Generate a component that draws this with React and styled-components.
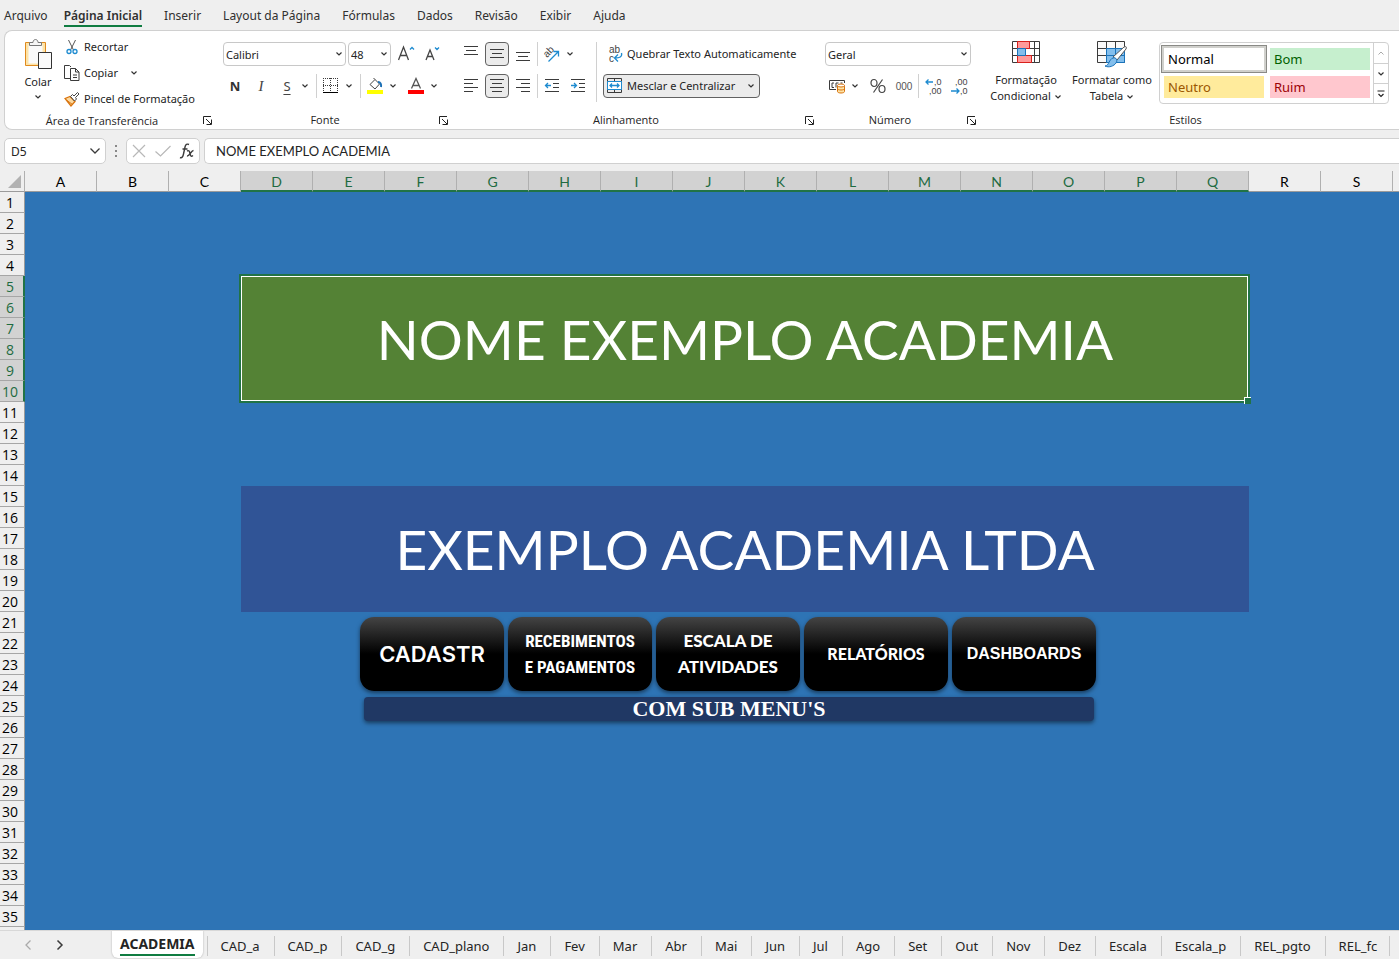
import React from "react";
import styled, { createGlobalStyle } from "styled-components";

const GlobalStyle = createGlobalStyle`
  * {
    box-sizing: border-box;
  }
  body {
    margin: 0;
    background: #efefef;
    color: #242424;
    font-family: "Noto Sans", "Open Sans", sans-serif;
    font-size: 12px;
  }
  button, input, select {
    font: inherit;
    color: inherit;
  }
  button {
    padding: 0;
    border: 0;
    background: none;
    cursor: pointer;
  }
`;

const Page = styled.div`
  height: 100vh;
  display: flex;
  flex-direction: column;
  overflow: hidden;
`;

/* ---------- menu ---------- */

const Menu = styled.nav`
  display: flex;
  flex: none;
  gap: 22px;
  height: 30px;
  padding: 4px 4px 0;
`;

const MenuItem = styled.a`
  height: 23px;
  line-height: 23px;
  color: #303030;
  font-size: 12px;
  font-weight: ${(p) => (p.$active ? 600 : 400)};
  text-decoration: none;
  white-space: nowrap;
  border-bottom: 2px solid ${(p) => (p.$active ? "#107c41" : "transparent")};

  &:first-child {
    margin-right: -6px;
  }
`;

/* ---------- ribbon ---------- */

const Ribbon = styled.div`
  display: flex;
  flex: none;
  height: 100px;
  margin-left: 4px;
  background: #fff;
  border: 1px solid #d0d0d0;
  border-right: 0;
  border-radius: 8px 0 0 8px;
`;

const Group = styled.section`
  position: relative;
  display: flex;
  flex-direction: column;
  justify-content: space-between;
  flex: ${(p) => (p.$width ? `0 0 ${p.$width}px` : "1 0 0")};

  & + &::before {
    content: "";
    position: absolute;
    left: -1px;
    top: 4px;
    bottom: 4px;
    width: 1px;
    background: #d0d0d0;
  }
`;

const GroupBody = styled.div`
  display: flex;
  padding: ${(p) => p.$pad || "11px 0 0 8px"};
`;

const GroupFooter = styled.div`
  display: flex;
  align-items: center;
  height: 18px;
  padding: 0 3px 0 0;
`;

const GroupName = styled.div`
  flex: 1;
  padding-right: 4px;
  text-align: center;
  font-family: "Open Sans", sans-serif;
  font-size: 11px;
  line-height: 16px;
`;

const Stack = styled.div`
  display: flex;
  flex-direction: column;
  align-items: flex-start;
  gap: ${(p) => p.$gap ?? 8}px;
  margin-left: ${(p) => p.$space || 0}px;
`;

const Row = styled.div`
  display: flex;
  align-items: center;
  gap: 2px;
  height: 24px;
`;

const Divider = styled.span`
  flex: none;
  width: 1px;
  height: ${(p) => p.$height || 24}px;
  margin-left: ${(p) => p.$space || 0}px;
  background: #d0d0d0;
`;

const IconButton = styled.button`
  display: flex;
  align-items: center;
  justify-content: center;
  flex: none;
  width: 24px;
  height: 24px;
  border-radius: 4px;
  border: 1px solid ${(p) => (p.$on ? "#616161" : "transparent")};
  background: ${(p) => (p.$on ? "#ebebeb" : "transparent")};
  margin-left: ${(p) => p.$space || 0}px;

  svg {
    flex: none;
  }
`;

const Split = styled.div`
  display: flex;
  align-items: center;
  margin-left: ${(p) => p.$space || 0}px;
`;

const Arrow = styled.button`
  display: flex;
  align-items: center;
  justify-content: center;
  width: 12px;
  height: 24px;
`;

const TextButton = styled.button`
  display: flex;
  align-items: center;
  gap: 4px;
  height: ${(p) => p.$height || 24}px;
  padding: ${(p) => p.$pad || "0"};
  border: 1px solid ${(p) => (p.$on ? "#616161" : "transparent")};
  border-radius: 4px;
  background: ${(p) => (p.$on ? "#ebebeb" : "transparent")};
  font-size: 11px;
  line-height: 16px;
  white-space: nowrap;
`;

const BigButton = styled.button`
  display: flex;
  flex-direction: column;
  align-items: center;
  width: ${(p) => p.$width}px;
  padding-top: ${(p) => p.$top || 0}px;
  font-size: 11px;
  line-height: 16px;
  gap: ${(p) => p.$gap || 0}px;

  span svg {
    vertical-align: middle;
  }
`;

const Combo = styled.label`
  display: flex;
  align-items: center;
  width: ${(p) => p.$width}px;
  height: 24px;
  padding: 0 2px;
  border: 1px solid #c8c8c8;
  border-radius: 4px;
  background: #fff;

  select {
    flex: 1;
    min-width: 0;
    padding: 0;
    border: 0;
    outline: 0;
    background: none;
    appearance: none;
    font-size: 11px;
  }
`;

const Gallery = styled.div`
  display: flex;
  height: 62px;
  margin: 2px 0 0 3px;
  border: 1px solid #d0d0d0;
  border-radius: 4px;
`;

const StyleGrid = styled.div`
  display: grid;
  grid-template-columns: 100px 100px;
  grid-auto-rows: 22px;
  gap: 6px;
  padding: 5px 3px 5px 4px;
`;

const StyleCell = styled.button`
  padding: 0 0 1px 4px;
  text-align: left;
  font-size: 13px;
  line-height: 20px;
  color: ${(p) => p.$color};
  background: ${(p) => p.$bg};
  box-shadow: ${(p) => (p.$on ? "0 0 0 2px #d0d0cc, 0 0 0 3px #8a8a86" : "none")};
`;

const GalleryNav = styled.div`
  display: grid;
  grid-template-rows: 1fr 1fr 1fr;
  width: 15px;
  border-left: 1px solid #d0d0d0;

  button {
    display: flex;
    align-items: center;
    justify-content: center;
  }
  button + button {
    border-top: 1px solid #d0d0d0;
  }
`;

/* ---------- formula bar ---------- */

const FormulaBar = styled.div`
  display: flex;
  flex: none;
  align-items: flex-start;
  height: 41px;
  padding: 8px 0 0 4px;
`;

const Field = styled.div`
  display: flex;
  align-items: center;
  height: 26px;
  border: 1px solid #d0d0d0;
  border-radius: 5px;
  background: #fff;
`;

const NameBox = styled(Field)`
  width: 102px;
  padding: 0 4px 0 6px;

  input {
    flex: 1;
    min-width: 0;
    padding: 0;
    border: 0;
    background: none;
    outline: 0;
    font-size: 12px;
  }
`;

const Dots = styled.div`
  display: flex;
  align-items: center;
  justify-content: center;
  width: 20px;
  height: 26px;
`;

const FormulaTools = styled(Field)`
  width: 74px;
  margin-right: 4px;
`;

const FormulaInput = styled.input`
  flex: 1;
  height: 26px;
  min-width: 0;
  padding: 0 11px;
  border: 1px solid #d0d0d0;
  border-right: 0;
  border-radius: 5px 0 0 5px;
  outline: 0;
  background: #fff;
  font-family: Lato, sans-serif;
  font-size: 13px;
`;

/* ---------- sheet ---------- */

const Sheet = styled.main`
  position: relative;
  flex: 1;
  min-height: 0;
  overflow: hidden;
  background: #2e74b5;
`;

const Table = styled.table`
  width: 1465px;
  table-layout: fixed;
  border-spacing: 0;
  font-family: Lato, "Open Sans", sans-serif;

  th, td {
    padding: 0;
  }
`;

const Corner = styled.th`
  width: 25px;
  height: 21px;
  background: #efefef;
  border-right: 1px solid #b0b0b0;
  border-bottom: 1px solid #9b9b9b;

  svg {
    display: block;
    margin-left: 8px;
  }
`;

const ColHead = styled.th`
  width: 72px;
  height: 21px;
  font-size: 14px;
  font-weight: 400;
  vertical-align: top;
  color: ${(p) => (p.$on ? "#1e6b41" : "#000")};
  background: ${(p) => (p.$on ? "#d2d2d2" : "#efefef")};
  border-right: 1px solid #b0b0b0;
  border-bottom: ${(p) => (p.$on ? "2px solid #217346" : "1px solid #9b9b9b")};

  span {
    display: block;
    height: 19px;
    line-height: 21px;
  }
`;

const RowHead = styled.th`
  height: 21px;
  font-family: "Open Sans", sans-serif;
  font-size: 14px;
  font-weight: 400;
  color: ${(p) => (p.$on ? "#1e6b41" : "#000")};
  background: ${(p) => (p.$on ? "#d2d2d2" : "#efefef")};
  border-right: ${(p) => (p.$on ? "2px solid #217346" : "1px solid #9b9b9b")};
  border-bottom: 1px solid #a6a6a6;

  span {
    display: block;
    width: 20px;
    height: 20px;
    line-height: 22px;
  }
`;

const Banner = styled.td`
  position: relative;
  color: #fff;
  background: ${(p) => p.$bg};
  font-size: 55px;
  text-align: center;
  vertical-align: middle;
`;

const Selection = styled.span`
  position: absolute;
  inset: -2px -1px -1px -2px;
  border: 2px solid #217346;
  box-shadow: inset 0 0 0 1px #fff;

  &::after {
    content: "";
    position: absolute;
    right: -3px;
    bottom: -3px;
    width: 6px;
    height: 6px;
    background: #217346;
    border-top: 1px solid #fff;
    border-left: 1px solid #fff;
  }
`;

/* shapes float over the cells */
const Shapes = styled.div`
  position: absolute;
  left: 360px;
  top: 446px;
  width: 736px;
`;

const ShapeRow = styled.div`
  display: flex;
  gap: 4px;
`;

const Shape = styled.button`
  width: 144px;
  height: 74px;
  border-radius: 14px;
  color: #fff;
  background: linear-gradient(#444 0%, #000 50%);
  box-shadow: 0 2px 4px rgba(0, 0, 0, 0.5);
  font-family: ${(p) => p.$font};
  font-size: ${(p) => p.$size}px;
  font-weight: ${(p) => p.$weight || 700};
  line-height: 26px;
`;

const SubMenu = styled.button`
  display: block;
  width: 730px;
  height: 24px;
  margin: 6px 0 0 4px;
  border-radius: 4px;
  color: #fff;
  background: #203864;
  box-shadow: 0 2px 4px rgba(0, 0, 0, 0.5);
  font-family: "Liberation Serif", serif;
  font-size: 22px;
  font-weight: 700;
  line-height: 24px;
`;

/* ---------- sheet tabs ---------- */

const TabBar = styled.div`
  display: flex;
  flex: none;
  height: 29px;
  overflow: hidden;
  border-top: 1px solid #d8d8d8;
`;

const TabNav = styled.div`
  display: flex;
  align-items: center;
  flex: none;
  width: 112px;
  padding-left: 20px;
  gap: 16px;

  button {
    display: flex;
    justify-content: center;
    width: 16px;
  }
`;

const ActiveTab = styled.button`
  flex: none;
  height: 27px;
  margin-right: 4px;
  padding: 0 8px 2px;
  background: #fff;
  border-radius: 0 0 6px 6px;
  box-shadow: 0 0 2px rgba(0, 0, 0, 0.3);
  font-size: 14px;
  font-weight: 700;

  span {
    display: block;
    height: 24px;
    line-height: 23px;
    border-bottom: 2px solid #107c41;
  }
`;

const Tab = styled.button`
  flex: none;
  height: 20px;
  margin-top: 5px;
  padding: 0 14px 0 13px;
  border-left: 1px solid #c8c8c8;
  font-size: 13px;
  line-height: 20px;

  &:last-child {
    padding-right: 12px;
    border-right: 1px solid #c8c8c8;
  }
`;

/* ---------- icons ---------- */

const Svg = ({ w = 16, h = 16, children }) => (
  <svg width={w} height={h} viewBox={`0 0 ${w} ${h}`} fill="none" stroke="#3b3b3b" aria-hidden="true">
    {children}
  </svg>
);

const Glyphs = ({ x, y, size = 9, ...rest }) => (
  <text x={x} y={y} fontFamily="Liberation Sans" fontSize={size} fill="#444" stroke="none" {...rest} />
);

const Chevron = ({ color = "#333" }) => (
  <Svg w={8} h={6}>
    <path d="M1.5 1.5 4 4l2.5-2.5" stroke={color} strokeWidth="1.2" />
  </Svg>
);

const Launcher = () => (
  <button aria-label="Mais opções">
    <Svg w={9} h={9}>
      <path d="M.5 8V.5H8M3 3l5 5M8.5 3.5v5h-5" stroke="#222" />
    </Svg>
  </button>
);

const PasteIcon = () => (
  <Svg w={28} h={32}>
    <path d="M1.5 4.500h20v23h-20z" fill="#fde3a7" stroke="#e08a1e" />
    <path d="M4.5 6.500h14v19h-14z" fill="#fafafa" stroke="none" />
    <path d="M5.5 7.500v-3h3.500c0-4 5-4 5 0h3.500v3z" fill="#f6f6f6" stroke="#777" />
    <path d="M14.5 14.500h13v16h-13z" fill="#fafafa" stroke="#333" />
  </Svg>
);

const CutIcon = () => (
  <Svg>
    <path d="M4.500 1 9.500 11M11.500 1 6.500 11" stroke="#555" />
    <circle cx="5" cy="12.5" r="2" stroke="#1e8bd0" strokeWidth="1.3" />
    <circle cx="11" cy="12.5" r="2" stroke="#1e8bd0" strokeWidth="1.3" />
  </Svg>
);

const CopyIcon = () => (
  <Svg>
    <path d="M6 13.500H.5V.5h5l1.500 1.500" />
    <path d="M6.500 3.500h5l3.500 3.500v8.500H6.500zM11.500 3.500V7H15M9 10h4M9 12.500h4" />
  </Svg>
);

const BrushIcon = () => (
  <Svg>
    <path d="M1 7.500 6 5.500l5 5-4 4.500z" fill="#fbd9a0" stroke="#d9730d" strokeWidth="1.3" />
    <path d="M3 9.500l5.500 4" stroke="#d9730d" />
    <path d="M6.500 5.500 8.500 3.500l1.500 1.500L13.500 1.500l1.500 1.500-3.500 3.500 1 1.500-2 2z" fill="#fff" stroke="#444" />
  </Svg>
);

const GrowFont = ({ size, up }) => (
  <Svg w={18} h={20}>
    <path
      d={size > 14 ? "M.5 16 5.500 3l5 13M2.500 11.500h6" : "M2 16 6 6l4 10M3.500 12.500h5"}
      stroke="#444"
      strokeWidth="1.3"
    />
    <path d={up ? "M12 5.500l2-2 2 2" : "M11 3.500l2 2 2-2"} stroke="#1e8bd0" strokeWidth="1.3" />
  </Svg>
);

const BoldMark = styled.b`
  font-size: 13px;
  color: #333;
`;

const ItalicMark = styled.i`
  font-family: "Liberation Serif", serif;
  font-size: 15px;
  color: #444;
`;

const UnderMark = styled.u`
  font-size: 13px;
  line-height: 20px;
  color: #444;
  text-underline-offset: 3px;
`;

const BordersIcon = () => (
  <Svg>
    <path d="M0 .5h15M0 7.500h15M.5 0v14M7.500 0v14M14.500 0v14" strokeDasharray="1 1" />
    <path d="M0 14.500h15" stroke="#000" />
  </Svg>
);

const FillIcon = () => (
  <Svg w={16} h={18}>
    <path d="M3 7.500 8 2.500l4.500 4.500-4.500 5zM8 2.500 6.500 1" stroke="#444" />
    <path d="M11 5c2.500 0 3.500 2 3 5" stroke="#1a6fb5" strokeWidth="2" />
    <path d="M0 15h16" stroke="#ff0" strokeWidth="4" />
  </Svg>
);

const FontColorIcon = () => (
  <Svg w={16} h={18}>
    <path d="M3.500 11.500 8 1.500l4.500 10M5 8.500h6" stroke="#555" strokeWidth="1.3" />
    <path d="M0 15h16" stroke="#f00" strokeWidth="4" />
  </Svg>
);

/* each entry is [x1, x2] of a text line */
const LINES = {
  left: [[1, 15], [1, 10], [1, 15], [1, 10]],
  center: [[1, 15], [3, 13], [1, 15], [3, 13]],
  right: [[1, 15], [6, 15], [1, 15], [6, 15]],
  vertical: [[1, 15], [3, 13], [1, 15]],
};

const AlignIcon = ({ kind, top = 1.5 }) => (
  <Svg>
    {LINES[kind].map(([a, b], i) => (
      <path key={i} d={`M${a} ${top + i * 4}H${b}`} />
    ))}
  </Svg>
);

const AngleIcon = () => (
  <Svg w={20} h={20}>
    <Glyphs x={2} y={11} size={10} transform="rotate(-45 7 9)">ab</Glyphs>
    <path d="M6.500 17.500 16 8M11.500 7.500h5v5" stroke="#1e8bd0" strokeWidth="1.3" />
  </Svg>
);

const IndentIcon = ({ out }) => (
  <Svg>
    <path d="M1 1.500h14M9 5.500h6M9 9.500h6M1 13.500h14" />
    <path
      d={out ? "M7 7.500H1.500M4 5 1.500 7.500 4 10" : "M1 7.500h5.500M4 5 6.500 7.500 4 10"}
      stroke="#1e8bd0"
      strokeWidth="1.3"
    />
  </Svg>
);

const WrapIcon = () => (
  <Svg w={15} h={20}>
    <Glyphs x={1} y={9} size={10}>ab</Glyphs>
    <Glyphs x={1} y={18} size={10}>c</Glyphs>
    <path d="M13.500 9c1 4-2 5-6.500 5M10 10.500 6.500 14l3.500 3.500" stroke="#1e8bd0" strokeWidth="1.3" />
  </Svg>
);

const MergeIcon = () => (
  <Svg>
    <path d="M.5.5h14v14H.5zM7.500.5v3M7.500 11.500v3" />
    <path d="M.5 3.500h14v8H.5z" fill="#fff" stroke="#1e8bd0" />
    <path d="M3 7.500h9M5 5.500 3 7.500l2 2M10 5.500l2 2-2 2" stroke="#1e8bd0" strokeWidth="1.3" />
  </Svg>
);

const MoneyIcon = () => (
  <Svg w={18} h={16}>
    <path d="M8 11.500H1.500v-9h15V5" />
    <path d="M6 5H4v4.500h2M8 9.500V5h2.500M12.500 5h2" />
    <path d="M9.500 7.500v6c0 2 7 2 7 0v-6" fill="#fde3a7" stroke="#d9730d" />
    <ellipse cx="13" cy="7.500" rx="3.5" ry="1.5" fill="#fff" stroke="#d9730d" />
    <path d="M9.500 10.500c0 2 7 2 7 0" stroke="#d9730d" />
  </Svg>
);

const PercentIcon = () => (
  <Svg>
    <path d="M12.500 1.500 3.500 14.500" stroke="#444" strokeWidth="1.2" />
    <ellipse cx="4" cy="5" rx="3" ry="3.500" stroke="#444" strokeWidth="1.2" />
    <ellipse cx="12" cy="11" rx="3" ry="3.500" stroke="#444" strokeWidth="1.2" />
  </Svg>
);

const Thousands = styled.span`
  font-family: "Liberation Sans", sans-serif;
  font-size: 10px;
  color: #555;
`;

const DecimalIcon = ({ more }) => (
  <Svg w={18} h={22}>
    <Glyphs x={more ? 10 : 5} y={10}>{more ? ",0" : ",00"}</Glyphs>
    <Glyphs x={more ? 5 : 10} y={19}>{more ? ",00" : ",0"}</Glyphs>
    <path
      d={more ? "M9 7H2M4.500 4.500 2 7l2.500 2.500" : "M1 16h8M6.500 13.500 9 16l-2.500 2.500"}
      stroke="#1e8bd0"
      strokeWidth="1.3"
    />
  </Svg>
);

const CondIcon = () => (
  <Svg w={28} h={24}>
    <path d="M.5 1.500h27v21H.5zM.5 8.500h27M.5 15.500h27M5.500 1.500v21M22.500 1.500v21" />
    <path d="M5.500 1.500h12v7h-12zM5.500 15.500h14v7h-14z" fill="#ff9a9a" stroke="#d8201c" />
    <path d="M5.500 8.500h8v7h-8z" fill="#83beec" stroke="#1a73ba" />
    <path d="M14 9h8v6h-8z" fill="#fff" stroke="none" />
  </Svg>
);

const TableIcon = () => (
  <Svg w={30} h={28}>
    <path d="M.5 1.500h27v21H.5zM9.500 1.500v21M18.500 1.500v7M.5 8.500h27M.5 15.500h9" fill="#fafafa" />
    <path d="M9.500 8.500h18v14h-18z" fill="#83beec" stroke="#1a73ba" />
    <path d="M18.500 8.500v14M9.500 15.500h18" stroke="#1a73ba" />
    <path d="M16 17 27 7c2-1 3 0 2 2l-9 11z" fill="#fff" stroke="#555" />
    <path d="M8 26c4 0 4-7 8-8 3-1 5 2 3 5s-7 5-11 3z" fill="#83beec" stroke="#1a73ba" />
  </Svg>
);

/* ---------- data ---------- */

const MENU = ["Arquivo", "Página Inicial", "Inserir", "Layout da Página", "Fórmulas", "Dados", "Revisão", "Exibir", "Ajuda"];

const COLUMNS = "ABCDEFGHIJKLMNOPQRST".split("");
const ROWS = Array.from({ length: 36 }, (_, i) => i + 1);

const BANNERS = {
  5: { text: "NOME EXEMPLO ACADEMIA", bg: "#548235", selected: true },
  15: { text: "EXEMPLO ACADEMIA LTDA", bg: "#305496" },
};

const SHAPES = [
  { text: ["CADASTR"], font: "Inter, sans-serif", size: 22, weight: 600 },
  { text: ["RECEBIMENTOS", "E PAGAMENTOS"], font: '"Liberation Sans Narrow", "Roboto Condensed", Roboto, sans-serif', size: 17 },
  { text: ["ESCALA DE", "ATIVIDADES"], font: "Lato, sans-serif", size: 17, weight: 900 },
  { text: ["RELATÓRIOS"], font: "Lato, sans-serif", size: 16, weight: 900 },
  { text: ["DASHBOARDS"], font: '"Liberation Sans", sans-serif', size: 16 },
];

const TABS = [
  "CAD_a", "CAD_p", "CAD_g", "CAD_plano", "Jan", "Fev", "Mar", "Abr", "Mai", "Jun", "Jul",
  "Ago", "Set", "Out", "Nov", "Dez", "Escala", "Escala_p", "REL_pgto", "REL_fc",
];

/* ---------- parts ---------- */

function Dropdown({ label, value, width }) {
  return (
    <Combo $width={width}>
      <select aria-label={label} defaultValue={value}>
        <option>{value}</option>
      </select>
      <Chevron />
    </Combo>
  );
}

function SplitButton({ label, space, children }) {
  return (
    <Split $space={space}>
      <IconButton aria-label={label}>{children}</IconButton>
      <Arrow aria-label={`${label}: opções`}>
        <Chevron />
      </Arrow>
    </Split>
  );
}

function RibbonGroup({ name, width, pad, launcher = true, children }) {
  return (
    <Group $width={width} aria-label={name}>
      <GroupBody $pad={pad}>{children}</GroupBody>
      <GroupFooter>
        <GroupName>{name}</GroupName>
        {launcher && <Launcher />}
      </GroupFooter>
    </Group>
  );
}

function RibbonBar() {
  return (
    <Ribbon>
      <RibbonGroup name="Área de Transferência" width={210} pad="3px 0 0 10px">
        <BigButton $width={46} $gap={4} $top={4}>
          <PasteIcon />
          <span>Colar</span>
          <Chevron />
        </BigButton>
        <Stack $gap={0}>
          <TextButton $height={26} $pad="0 2px">
            <CutIcon />
            Recortar
          </TextButton>
          <TextButton $height={26} $pad="0 2px">
            <CopyIcon />
            Copiar
            <Split $space={8}>
              <Chevron />
            </Split>
          </TextButton>
          <TextButton $height={26} $pad="0 2px">
            <BrushIcon />
            Pincel de Formatação
          </TextButton>
        </Stack>
      </RibbonGroup>

      <RibbonGroup name="Fonte" width={236}>
        <Stack>
          <Row>
            <Dropdown label="Fonte" value="Calibri" width={123} />
            <Dropdown label="Tamanho" value="48" width={43} />
            <IconButton aria-label="Aumentar fonte" $space={2}>
              <GrowFont size={18} up />
            </IconButton>
            <IconButton aria-label="Diminuir fonte">
              <GrowFont size={14} />
            </IconButton>
          </Row>
          <Row>
            <IconButton><BoldMark>N</BoldMark></IconButton>
            <IconButton><ItalicMark>I</ItalicMark></IconButton>
            <SplitButton label="Sublinhado"><UnderMark>S</UnderMark></SplitButton>
            <Divider $space={3} />
            <SplitButton label="Bordas"><BordersIcon /></SplitButton>
            <Divider $space={3} />
            <SplitButton label="Cor de preenchimento"><FillIcon /></SplitButton>
            <SplitButton label="Cor da fonte" space={3}><FontColorIcon /></SplitButton>
          </Row>
        </Stack>
      </RibbonGroup>

      <RibbonGroup name="Alinhamento" width={366}>
        <Stack>
          <Row>
            <IconButton aria-label="Em cima"><AlignIcon kind="vertical" top={0.5} /></IconButton>
            <IconButton aria-label="No meio" $on><AlignIcon kind="vertical" top={3.5} /></IconButton>
            <IconButton aria-label="Embaixo"><AlignIcon kind="vertical" top={6.5} /></IconButton>
            <Divider />
            <SplitButton label="Orientação"><AngleIcon /></SplitButton>
          </Row>
          <Row>
            <IconButton aria-label="Esquerda"><AlignIcon kind="left" /></IconButton>
            <IconButton aria-label="Centro" $on><AlignIcon kind="center" /></IconButton>
            <IconButton aria-label="Direita"><AlignIcon kind="right" /></IconButton>
            <Divider />
            <IconButton aria-label="Diminuir recuo"><IndentIcon out /></IconButton>
            <IconButton aria-label="Aumentar recuo"><IndentIcon /></IconButton>
          </Row>
        </Stack>
        <Divider $space={6} $height={60} />
        <Stack $space={6}>
          <TextButton $pad="0 4px"><WrapIcon />Quebrar Texto Automaticamente</TextButton>
          <TextButton $on $pad="0 4px 0 3px">
            <MergeIcon />
            Mesclar e Centralizar
            <Split $space={8}><Chevron /></Split>
          </TextButton>
        </Stack>
      </RibbonGroup>

      <RibbonGroup name="Número" width={162}>
        <Stack>
          <Row>
            <Dropdown label="Formato de número" value="Geral" width={146} />
          </Row>
          <Row>
            <SplitButton label="Contabilização"><MoneyIcon /></SplitButton>
            <IconButton aria-label="Porcentagem" $space={3}><PercentIcon /></IconButton>
            <IconButton><Thousands>000</Thousands></IconButton>
            <Divider />
            <IconButton aria-label="Aumentar casas"><DecimalIcon more /></IconButton>
            <IconButton aria-label="Diminuir casas"><DecimalIcon /></IconButton>
          </Row>
        </Stack>
      </RibbonGroup>

      <RibbonGroup name="Estilos" launcher={false} pad="9px 0 0 5px">
        <BigButton $width={84} $gap={8}>
          <CondIcon />
          <span>Formatação<br />Condicional <Chevron /></span>
        </BigButton>
        <BigButton $width={88} $gap={4}>
          <TableIcon />
          <span>Formatar como<br />Tabela <Chevron /></span>
        </BigButton>
        <Gallery>
          <StyleGrid>
            <StyleCell $on $color="#000" $bg="#fff">Normal</StyleCell>
            <StyleCell $color="#006100" $bg="#c6efce">Bom</StyleCell>
            <StyleCell $color="#9c5700" $bg="#ffeb9c">Neutro</StyleCell>
            <StyleCell $color="#9c0006" $bg="#ffc7ce">Ruim</StyleCell>
          </StyleGrid>
          <GalleryNav>
            <button aria-label="Anterior">
              <Svg w={8} h={6}><path d="M1.500 4.500 4 2l2.500 2.500" stroke="#aaa" /></Svg>
            </button>
            <button aria-label="Próximo"><Chevron /></button>
            <button aria-label="Mais estilos">
              <Svg w={8} h={8}><path d="M.5 1h7M1.500 4 4 6.500 6.500 4" stroke="#222" strokeWidth="1.2" /></Svg>
            </button>
          </GalleryNav>
        </Gallery>
      </RibbonGroup>
    </Ribbon>
  );
}

function Formula() {
  return (
    <FormulaBar>
      <NameBox>
        <input aria-label="Caixa de nome" defaultValue="D5" />
        <Svg w={12} h={8}><path d="M1.500 1.500 6 6l4.500-4.500" strokeWidth="1.3" /></Svg>
      </NameBox>
      <Dots>
        <Svg w={2} h={12}><path d="M1 0v2M1 5v2M1 10v2" stroke="#888" strokeWidth="2" /></Svg>
      </Dots>
      <FormulaTools>
        <IconButton aria-label="Cancelar">
          <Svg w={14} h={14}><path d="M1 1l12 12M13 1 1 13" stroke="#b8b8b8" strokeWidth="1.2" /></Svg>
        </IconButton>
        <IconButton aria-label="Inserir">
          <Svg><path d="M.5 8.500 5.500 13 15.500 3" stroke="#b8b8b8" strokeWidth="1.2" /></Svg>
        </IconButton>
        <IconButton aria-label="Inserir função">
          <Svg>
            <path d="M1 14.500c2 1 3-1 3.500-3.500L6 4c.5-2.500 2-3.500 4-2.500M3.500 6h5" strokeWidth="1.4" />
            <path d="M8 8c2-1 2.500 0 3 2.500s1 3.500 3 2M14.500 7.500c-2 0-4.500 6-6.500 5.500" strokeWidth="1.4" />
          </Svg>
        </IconButton>
      </FormulaTools>
      <FormulaInput aria-label="Barra de fórmulas" defaultValue="NOME EXEMPLO ACADEMIA" />
    </FormulaBar>
  );
}

function Cells({ row }) {
  const banner = BANNERS[row];
  if (banner) {
    return (
      <>
        <td colSpan={3} />
        <Banner colSpan={14} rowSpan={6} $bg={banner.bg}>
          {banner.text}
          {banner.selected && <Selection />}
        </Banner>
        <td colSpan={3} />
      </>
    );
  }
  const covered = (row > 5 && row <= 10) || (row > 15 && row <= 20);
  return covered ? (
    <>
      <td colSpan={3} />
      <td colSpan={3} />
    </>
  ) : (
    <td colSpan={20} />
  );
}

export default function App() {
  return (
    <Page>
      <GlobalStyle />
      <Menu>
        {MENU.map((item) => (
          <MenuItem key={item} href="#" $active={item === "Página Inicial"}>
            {item}
          </MenuItem>
        ))}
      </Menu>
      <RibbonBar />
      <Formula />
      <Sheet>
        <Table>
          <thead>
            <tr>
              <Corner>
                <Svg w={13} h={13}><path d="M13 0v13H0z" fill="#b2b2b2" stroke="none" /></Svg>
              </Corner>
              {COLUMNS.map((c) => (
                <ColHead key={c} $on={c >= "D" && c <= "Q"}><span>{c}</span></ColHead>
              ))}
            </tr>
          </thead>
          <tbody>
            {ROWS.map((n) => (
              <tr key={n}>
                <RowHead $on={n >= 5 && n <= 10}><span>{n}</span></RowHead>
                <Cells row={n} />
              </tr>
            ))}
          </tbody>
        </Table>
        <Shapes>
          <ShapeRow>
            {SHAPES.map(({ text, font, size, weight }) => (
              <Shape key={text[0]} $font={font} $size={size} $weight={weight}>
                {text.map((line) => (
                  <div key={line}>{line}</div>
                ))}
              </Shape>
            ))}
          </ShapeRow>
          <SubMenu>COM SUB MENU'S</SubMenu>
        </Shapes>
      </Sheet>
      <TabBar>
        <TabNav>
          <button aria-label="Planilha anterior">
            <Svg w={8} h={12}><path d="M6.500 1.500 2 6l4.500 4.500" stroke="#aaa" strokeWidth="1.3" /></Svg>
          </button>
          <button aria-label="Próxima planilha">
            <Svg w={8} h={12}><path d="M1.500 1.500 6 6l-4.500 4.500" strokeWidth="1.5" /></Svg>
          </button>
        </TabNav>
        <ActiveTab><span>ACADEMIA</span></ActiveTab>
        {TABS.map((t) => (
          <Tab key={t}>{t}</Tab>
        ))}
      </TabBar>
    </Page>
  );
}
